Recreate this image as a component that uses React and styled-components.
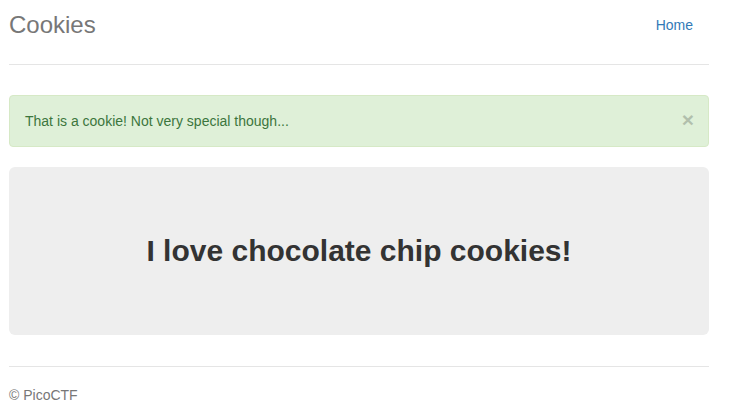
import React, { useState } from 'react';
import styled, { createGlobalStyle } from 'styled-components';

const GlobalStyle = createGlobalStyle`
  html, body {
    margin: 0;
    padding: 0;
    background: #fff;
  }
  body {
    font-family: "Liberation Sans", Arial, Helvetica, sans-serif;
    font-size: 14px;
    line-height: 20px;
    color: #333;
  }
  * { box-sizing: border-box; }
`;

const Container = styled.div`
  width: 700px;
  margin-left: 9px;
`;

const Header = styled.div`
  display: flex;
  justify-content: space-between;
  align-items: flex-start;
  padding-top: 5px;
  padding-bottom: 19px;
  border-bottom: 1px solid #e5e5e5;
  margin-bottom: 30px;
`;

const Brand = styled.h3`
  margin: 0;
  font-size: 24px;
  font-weight: 400;
  line-height: 40px;
  color: #777;
`;

const NavLink = styled.a`
  display: block;
  padding: 10px 16px 10px 15px;
  line-height: 20px;
  color: #337ab7;
  text-decoration: none;
`;

const Alert = styled.div`
  display: flex;
  justify-content: space-between;
  align-items: flex-start;
  padding: 15px;
  margin-bottom: 20px;
  border: 1px solid #d6e9c6;
  border-radius: 4px;
  background: #dff0d8;
  color: #3c763d;
`;

const Close = styled.button`
  margin: -2px -1px 0 0;
  padding: 0;
  border: 0;
  background: transparent;
  font-family: "Liberation Sans", Arial, sans-serif;
  font-size: 21px;
  font-weight: 700;
  line-height: 1;
  color: #000;
  opacity: 0.2;
  cursor: pointer;
`;

const Jumbotron = styled.div`
  padding: 67px 0 68px;
  margin-bottom: 31px;
  border-radius: 6px;
  background: #eee;
  text-align: center;
`;

const Title = styled.h1`
  margin: 0;
  font-size: 30px;
  font-weight: 700;
  line-height: 33px;
  color: #333;
`;

const Footer = styled.footer`
  padding-top: 18px;
  border-top: 1px solid #e5e5e5;
  color: #777;
`;

export default function App() {
  const [showAlert, setShowAlert] = useState(true);

  return (
    <>
      <GlobalStyle />
      <Container>
        <Header>
          <Brand>Cookies</Brand>
          <NavLink href="#">Home</NavLink>
        </Header>
        {showAlert && (
          <Alert>
            <span>That is a cookie! Not very special though...</span>
            <Close onClick={() => setShowAlert(false)}>×</Close>
          </Alert>
        )}
        <Jumbotron>
          <Title>I love chocolate chip cookies!</Title>
        </Jumbotron>
        <Footer>© PicoCTF</Footer>
      </Container>
    </>
  );
}
